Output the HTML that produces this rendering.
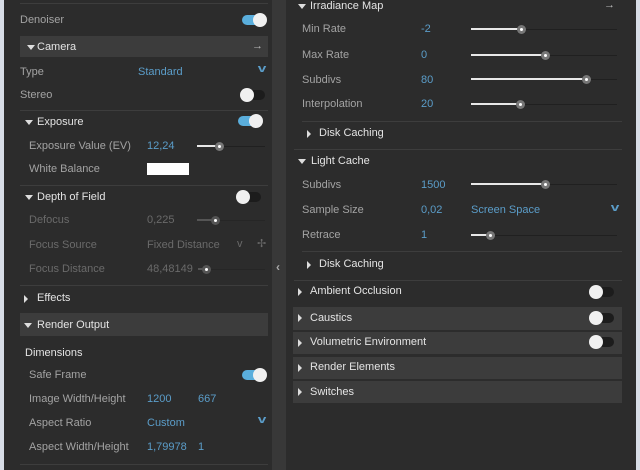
<!DOCTYPE html><html><head><meta charset="utf-8"><style>
body{margin:0;width:640px;height:470px;overflow:hidden;background:#d8dde6;font-family:"Liberation Sans",sans-serif;font-size:11px;position:relative}
.p{position:absolute;background:#2c2c2c}
.t{position:absolute;color:#a3a3a3;white-space:nowrap;line-height:13px}
.h{color:#e4e4e4}
.v{color:#5b9dc9}
.d{color:#6a6a6a}
.bar{position:absolute;background:#3c3c3c}
.sep{position:absolute;height:1px;background:#3d3d3d}
.tg{position:absolute;width:22px;height:10px;border-radius:5px;background:#1c1c1c}
.tg.on{background:#5aaedc}
.tg i{position:absolute;top:-2px;width:14px;height:14px;border-radius:50%;background:#f0f0f0}
.tg.on i{right:-3px}.tg:not(.on) i{left:-3px}
.tr{position:absolute;height:1px;background:#202020}
.tr b{position:absolute;left:0;top:-1px;height:2px;background:#e8e8e8}
.tr i{position:absolute;top:-4px;width:9px;height:9px;border-radius:50%;background:#777;border:0;margin-left:-4px}
.tr i::after{content:"";position:absolute;left:3px;top:3px;width:3px;height:3px;background:#fff;border-radius:50%}
.ar{position:absolute;width:0;height:0}
.dn{border-left:4px solid transparent;border-right:4px solid transparent;border-top:5px solid #ddd}
.rt{border-top:4px solid transparent;border-bottom:4px solid transparent;border-left:4px solid #ddd}
.chev{position:absolute;color:#5b9dc9;font-size:11px;font-weight:bold;transform:scaleX(1.4)}
</style></head><body>
<div class="p" style="left:4px;top:0;width:268px;height:470px"></div>
<div class="p" style="left:272px;top:0;width:14px;height:470px;background:#383838"></div>
<div class="p" style="left:286px;top:0;width:350px;height:470px"></div>
<div class="t" style="left:276px;top:261px;color:#aaa;font-size:12px;font-weight:bold">‹</div>

<!-- LEFT -->
<div class="sep" style="left:20px;top:3px;width:248px"></div>
<div class="t" style="left:20px;top:14px">Denoiser</div>
<div class="tg on" style="left:242px;top:15px"><i></i></div>
<div class="bar" style="left:20px;top:36px;width:248px;height:21px"></div>
<div class="ar dn" style="left:27px;top:45px"></div>
<div class="t h" style="left:37px;top:41px">Camera</div>
<div class="t" style="left:252px;top:40px;color:#bbb">→</div>
<div class="t" style="left:20px;top:66px">Type</div>
<div class="t v" style="left:138px;top:66px">Standard</div>
<div class="chev" style="left:259px;top:63px">v</div>
<div class="t" style="left:20px;top:89px">Stereo</div>
<div class="tg" style="left:243px;top:90px"><i></i></div>
<div class="sep" style="left:20px;top:110px;width:248px"></div>
<div class="ar dn" style="left:25px;top:120px"></div>
<div class="t h" style="left:37px;top:116px">Exposure</div>
<div class="tg on" style="left:238px;top:116px"><i></i></div>
<div class="t" style="left:29px;top:140px">Exposure Value (EV)</div>
<div class="t v" style="left:147px;top:140px">12,24</div>
<div class="tr" style="left:197px;top:146px;width:68px"><b style="width:22px"></b><i style="left:22px"></i></div>
<div class="t" style="left:29px;top:163px">White Balance</div>
<div style="position:absolute;left:147px;top:163px;width:42px;height:12px;background:#fff"></div>
<div class="sep" style="left:20px;top:185px;width:248px"></div>
<div class="ar dn" style="left:25px;top:195px"></div>
<div class="t h" style="left:37px;top:191px">Depth of Field</div>
<div class="tg" style="left:239px;top:192px"><i></i></div>
<div class="t d" style="left:29px;top:214px">Defocus</div>
<div class="t d" style="left:147px;top:214px">0,225</div>
<div class="tr" style="left:197px;top:220px;width:68px;background:#262626"><b style="width:18px;background:#555"></b><i style="left:18px;background:#555"></i></div>
<div class="t d" style="left:29px;top:239px">Focus Source</div>
<div class="t d" style="left:147px;top:239px">Fixed Distance</div>
<div class="t d" style="left:237px;top:238px">v</div>
<div class="t d" style="left:257px;top:238px">✢</div>
<div class="t d" style="left:29px;top:263px">Focus Distance</div>
<div class="t d" style="left:147px;top:263px">48,48149</div>
<div class="tr" style="left:198px;top:269px;width:67px;background:#262626"><b style="width:8px;background:#555"></b><i style="left:8px;background:#555"></i></div>
<div class="sep" style="left:20px;top:285px;width:248px"></div>
<div class="ar rt" style="left:24px;top:295px"></div>
<div class="t h" style="left:37px;top:292px">Effects</div>
<div class="bar" style="left:20px;top:313px;width:248px;height:23px"></div>
<div class="ar dn" style="left:24px;top:323px"></div>
<div class="t h" style="left:37px;top:319px">Render Output</div>
<div class="t h" style="left:25px;top:347px">Dimensions</div>
<div class="t" style="left:29px;top:369px">Safe Frame</div>
<div class="tg on" style="left:242px;top:370px"><i></i></div>
<div class="t" style="left:29px;top:393px">Image Width/Height</div>
<div class="t v" style="left:147px;top:393px">1200</div>
<div class="t v" style="left:198px;top:393px">667</div>
<div class="t" style="left:29px;top:417px">Aspect Ratio</div>
<div class="t v" style="left:147px;top:417px">Custom</div>
<div class="chev" style="left:259px;top:414px">v</div>
<div class="t" style="left:29px;top:441px">Aspect Width/Height</div>
<div class="t v" style="left:147px;top:441px">1,79978</div>
<div class="t v" style="left:198px;top:441px">1</div>
<div class="sep" style="left:20px;top:464px;width:248px"></div>

<!-- RIGHT -->
<div class="ar dn" style="left:298px;top:4px"></div>
<div class="t h" style="left:310px;top:0px">Irradiance Map</div>
<div class="t" style="left:604px;top:-1px;color:#bbb">→</div>
<div class="t" style="left:302px;top:23px">Min Rate</div>
<div class="t v" style="left:421px;top:23px">-2</div>
<div class="tr" style="left:471px;top:29px;width:146px"><b style="width:50px"></b><i style="left:50px"></i></div>
<div class="t" style="left:302px;top:49px">Max Rate</div>
<div class="t v" style="left:421px;top:49px">0</div>
<div class="tr" style="left:471px;top:55px;width:146px"><b style="width:74px"></b><i style="left:74px"></i></div>
<div class="t" style="left:302px;top:74px">Subdivs</div>
<div class="t v" style="left:421px;top:74px">80</div>
<div class="tr" style="left:471px;top:79px;width:146px"><b style="width:115px"></b><i style="left:115px"></i></div>
<div class="t" style="left:302px;top:98px">Interpolation</div>
<div class="t v" style="left:421px;top:98px">20</div>
<div class="tr" style="left:471px;top:104px;width:146px"><b style="width:49px"></b><i style="left:49px"></i></div>
<div class="sep" style="left:302px;top:121px;width:320px"></div>
<div class="ar rt" style="left:307px;top:130px"></div>
<div class="t h" style="left:319px;top:127px">Disk Caching</div>
<div class="sep" style="left:294px;top:149px;width:328px"></div>
<div class="ar dn" style="left:298px;top:159px"></div>
<div class="t h" style="left:311px;top:155px">Light Cache</div>
<div class="t" style="left:302px;top:179px">Subdivs</div>
<div class="t v" style="left:421px;top:179px">1500</div>
<div class="tr" style="left:471px;top:184px;width:146px"><b style="width:74px"></b><i style="left:74px"></i></div>
<div class="t" style="left:302px;top:204px">Sample Size</div>
<div class="t v" style="left:421px;top:204px">0,02</div>
<div class="t v" style="left:471px;top:204px">Screen Space</div>
<div class="chev" style="left:612px;top:202px">v</div>
<div class="t" style="left:302px;top:229px">Retrace</div>
<div class="t v" style="left:421px;top:229px">1</div>
<div class="tr" style="left:471px;top:235px;width:146px"><b style="width:19px"></b><i style="left:19px"></i></div>
<div class="sep" style="left:302px;top:251px;width:320px"></div>
<div class="ar rt" style="left:307px;top:261px"></div>
<div class="t h" style="left:319px;top:258px">Disk Caching</div>
<div class="sep" style="left:294px;top:280px;width:328px"></div>
<div class="ar rt" style="left:298px;top:288px"></div>
<div class="t h" style="left:310px;top:285px">Ambient Occlusion</div>
<div class="tg" style="left:592px;top:287px"><i></i></div>
<div class="bar" style="left:293px;top:307px;width:329px;height:23px"></div>
<div class="ar rt" style="left:298px;top:314px"></div>
<div class="t h" style="left:310px;top:312px">Caustics</div>
<div class="tg" style="left:592px;top:313px"><i></i></div>
<div class="bar" style="left:293px;top:332px;width:329px;height:22px"></div>
<div class="ar rt" style="left:298px;top:339px"></div>
<div class="t h" style="left:310px;top:336px">Volumetric Environment</div>
<div class="tg" style="left:592px;top:337px"><i></i></div>
<div class="bar" style="left:293px;top:357px;width:329px;height:22px"></div>
<div class="ar rt" style="left:298px;top:364px"></div>
<div class="t h" style="left:310px;top:361px">Render Elements</div>
<div class="bar" style="left:293px;top:381px;width:329px;height:22px"></div>
<div class="ar rt" style="left:298px;top:388px"></div>
<div class="t h" style="left:310px;top:386px">Switches</div>
</body></html>
